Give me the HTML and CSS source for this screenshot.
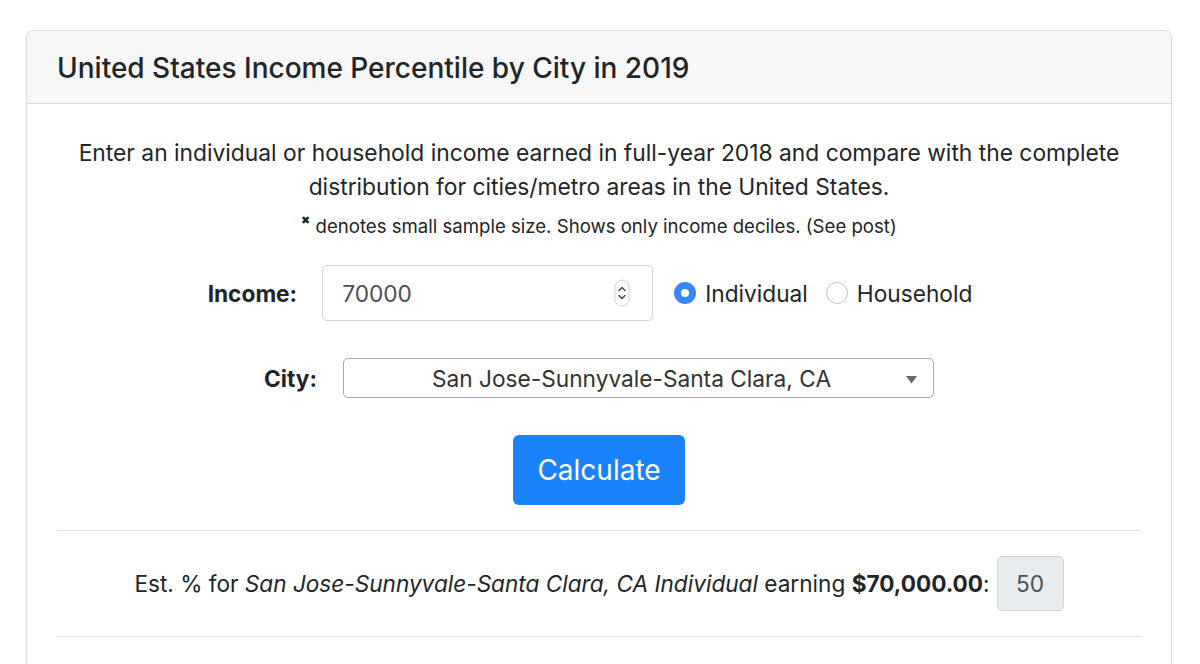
FILE: index.html
```html
<!DOCTYPE html>
<html lang="en">
<head>
<meta charset="utf-8">
<title>United States Income Percentile by City in 2019</title>
<link rel="stylesheet" href="styles.css">
</head>
<body>
<div class="card">
  <div class="card-header">
    <h5 class="card-title">United States Income Percentile by City in 2019</h5>
  </div>
  <div class="card-body">
    <p class="intro">Enter an individual or household income earned in full-year 2018 and compare with the complete distribution for cities/metro areas in the United States.</p>
    <p class="note"><sup class="mark">&#x2716;</sup> denotes small sample size. Shows only income deciles. (See post)</p>

    <div class="row income-row">
      <label class="label">Income:</label>
      <div class="input">
        <span class="input-value">70000</span>
        <svg class="spinner" width="16" height="28" viewBox="0 0 16 28">
          <rect x="1" y="1" width="14" height="26" rx="7" fill="#fff" stroke="#cfcfcf" stroke-width="1"/>
          <path d="M5 11.5 L8 8.5 L11 11.5" fill="none" stroke="#444" stroke-width="1.4" stroke-linecap="round" stroke-linejoin="round"/>
          <path d="M5 16.5 L8 19.5 L11 16.5" fill="none" stroke="#444" stroke-width="1.4" stroke-linecap="round" stroke-linejoin="round"/>
        </svg>
      </div>
      <div class="radios">
        <span class="radio">
          <span class="radio-circle checked"></span>
          <span class="radio-label">Individual</span>
        </span>
        <span class="radio">
          <span class="radio-circle"></span>
          <span class="radio-label">Household</span>
        </span>
      </div>
    </div>

    <div class="row city-row">
      <label class="label">City:</label>
      <div class="select">
        <span class="select-value">San Jose-Sunnyvale-Santa Clara, CA</span>
        <svg class="caret" width="11" height="8" viewBox="0 0 11 8"><path d="M0 0 H11 L5.5 7.5 Z" fill="#6b6b6b"/></svg>
      </div>
    </div>

    <div class="row button-row">
      <button class="btn">Calculate</button>
    </div>

    <hr class="rule">

    <div class="row result-row">
      <span class="result-text">Est. % for <em>San Jose-Sunnyvale-Santa Clara, CA Individual</em> earning <strong>$70,000.00</strong>:</span>
      <span class="result-box">50</span>
    </div>

    <hr class="rule">
  </div>
</div>
</body>
</html>
```

FILE: styles.css
```css
html, body {
  margin: 0;
  padding: 0;
  background: #ffffff;
}

body {
  font-family: Inter, "Liberation Sans", Arial, sans-serif;
  color: #212529;
  height: 664px;
  overflow: hidden;
}

.card {
  margin: 30px 28px 0 26px;
  border: 1px solid #dedede;
  border-bottom: none;
  border-radius: 7px 7px 0 0;
  height: 634px;
  box-sizing: border-box;
}

.card-header {
  height: 72px;
  background: #f7f7f7;
  border-bottom: 1px solid #dadada;
  border-radius: 7px 7px 0 0;
  display: flex;
  align-items: center;
  padding-left: 30px;
}

.card-title {
  margin: 0;
  font-size: 28px;
  font-weight: 500;
  color: #212529;
  padding-top: 1px;
}

.card-body {
  padding: 32px 30px 0 30px;
}

.intro {
  margin: 0;
  text-align: center;
  font-size: 22.8px;
  line-height: 34px;
}

.note {
  margin: 9px 0 0 0;
  text-align: center;
  font-size: 18.6px;
  line-height: 26px;
}

.mark {
  font-size: 11px;
  vertical-align: 9px;
  line-height: 0;
}

.row {
  display: flex;
  justify-content: center;
  align-items: center;
}

.label {
  font-weight: 700;
  font-size: 22.7px;
}

.income-row {
  margin-top: 26px;
  height: 56px;
  padding-right: 18px;
}

.income-row .label {
  margin-right: 25px;
}

.input {
  height: 54px;
  border: 1px solid #cfd3d7;
  border-radius: 5px;
  display: flex;
  align-items: center;
  justify-content: space-between;
  padding: 0 22px 0 19px;
  box-sizing: content-box;
  width: 288px;
  font-size: 22.7px;
  color: #495057;
}

.spinner {
  display: block;
}

.radios {
  display: flex;
  align-items: center;
  margin-left: 21px;
}

.radio {
  display: flex;
  align-items: center;
  font-size: 22.7px;
  color: #212529;
}

.radio + .radio {
  margin-left: 18px;
}

.radio-circle {
  width: 22px;
  height: 22px;
  border: 1px solid #c2c2c2;
  border-radius: 50%;
  background: #fff;
  margin-right: 9px;
  box-sizing: border-box;
}

.radio-circle.checked {
  border: 7px solid #3a86f7;
  background: #fff;
}

.city-row {
  margin-top: 37px;
  height: 40px;
}

.city-row .label {
  margin-right: 26px;
}

.select {
  width: 591px;
  height: 40px;
  box-sizing: border-box;
  border: 1px solid #a9a9a9;
  border-radius: 5px;
  display: flex;
  align-items: center;
  position: relative;
  font-size: 22.7px;
  color: #333;
}

.select-value {
  flex: 1;
  text-align: center;
  padding-right: 14px;
}

.caret {
  position: absolute;
  right: 16px;
  top: 17px;
}

.button-row {
  margin-top: 37px;
}

.btn {
  width: 172px;
  height: 70px;
  background: #1a82fb;
  color: #ffffff;
  border: none;
  border-radius: 6px;
  font-family: Inter, "Liberation Sans", Arial, sans-serif;
  font-size: 28px;
  padding: 0;
}

.rule {
  margin: 25px 0 0 0;
  border: none;
  border-top: 1px solid #e3e3e3;
  height: 0;
}

.result-row {
  margin-top: 25px;
  height: 55px;
  font-size: 22.6px;
}

.result-text em {
  font-style: italic;
}

.result-text strong {
  font-weight: 700;
}

.result-box {
  margin-left: 7px;
  width: 67px;
  height: 55px;
  box-sizing: border-box;
  background: #e9ecef;
  border: 1px solid #ced4da;
  border-radius: 5px;
  display: flex;
  align-items: center;
  justify-content: center;
  color: #495057;
}
```
